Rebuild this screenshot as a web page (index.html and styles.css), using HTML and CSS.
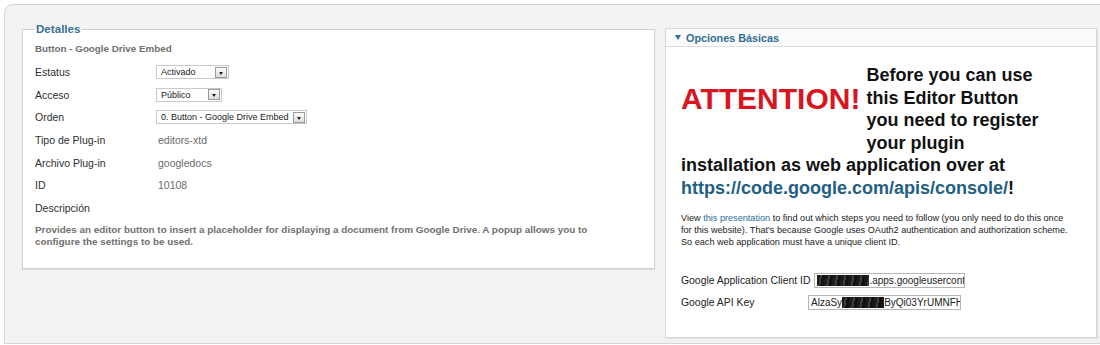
FILE: index.html
```html
<!DOCTYPE html>
<html lang="es">
  <head>
    <meta charset="UTF-8" />
    <title>Plug-in: Button - Google Drive Embed</title>
    <link rel="stylesheet" href="styles.css">
  </head>
  <body>
    <div class="page">
      <fieldset class="details">
        <legend>Detalles</legend>
        <p class="title">Button - Google Drive Embed</p>
        <ul class="fields">
          <li>
            <span class="label">Estatus</span>
            <span class="select sel-status">Activado<i class="arrow"></i></span>
          </li>
          <li>
            <span class="label">Acceso</span>
            <span class="select sel-access">Público<i class="arrow"></i></span>
          </li>
          <li>
            <span class="label">Orden</span>
            <span class="select sel-order">0. Button - Google Drive Embed<i class="arrow"></i></span>
          </li>
          <li>
            <span class="label">Tipo de Plug-in</span>
            <span class="value">editors-xtd</span>
          </li>
          <li>
            <span class="label">Archivo Plug-in</span>
            <span class="value">googledocs</span>
          </li>
          <li>
            <span class="label">ID</span>
            <span class="value">10108</span>
          </li>
          <li>
            <span class="label">Descripción</span>
          </li>
        </ul>
        <p class="desc">
          Provides an editor button to insert a placeholder for displaying a document from Google
          Drive. A popup allows you to configure the settings to be used.
        </p>
      </fieldset>

      <div class="panel">
        <h3 class="panel-head"><span class="tri"></span>Opciones Básicas</h3>
        <div class="panel-body">
          <div class="notice">
            <span class="attention">ATTENTION!</span>
            Before you can use this Editor Button you need to register your plugin installation as
            web application over at
            <a href="#">https://code.google.com/apis/console/</a>!
          </div>
          <p class="small">
            View <a href="#">this presentation</a> to find out which steps you need to follow (you
            only need to do this once for this website). That's because Google uses OAuth2
            authentication and authorization scheme. So each web application must have a unique
            client ID.
          </p>
          <div class="opt">
            <label>Google Application Client ID</label>
            <span class="input input-client"><i class="redact r1"></i>.apps.googleusercontent.com</span>
          </div>
          <div class="opt">
            <label>Google API Key</label>
            <span class="input input-key">AlzaSy<i class="redact r2"></i>ByQi03YrUMNFHnH5</span>
          </div>
        </div>
      </div>
    </div>
  </body>
</html>
```

FILE: styles.css
```css
* {
  box-sizing: border-box;
}
html,
body {
  overflow: hidden;
}
body {
  margin: 0;
  font-family: "Liberation Sans", Arial, Helvetica, sans-serif;
  color: #333;
  background-color: #fff;
}
.page {
  display: flex;
  align-items: flex-start;
  gap: 10px;
  width: 1130px;
  height: 340px;
  margin: 4px 0 0 4px;
  padding: 17px 0 0 17px;
  background-color: #f3f3f3;
  border: 1px solid #d6d6d6;
  border-radius: 9px 0 0 0;
}

/* left block */
.details {
  width: 633px;
  margin: 0;
  padding: 0 11px 20px 12px;
  background-color: #fff;
  border: 1px solid #d0d0d0;
  box-shadow: 0 1px 1px rgba(0, 0, 0, 0.08);
}
.details legend {
  padding: 0 1px;
  font-size: 11.6px;
  font-weight: bold;
  line-height: 14px;
  color: #3a7094;
}
.title {
  margin: 2px 0 0;
  height: 22.7px;
  line-height: 22.7px;
  font-size: 9.8px;
  font-weight: bold;
  color: #707070;
}
.fields {
  list-style: none;
  margin: 0;
  padding: 0;
}
.fields li {
  display: flex;
  align-items: center;
  height: 22.7px;
  font-size: 10.5px;
}
.label {
  width: 121px;
  color: #2e2e2e;
}
.value {
  margin-left: 2px;
  color: #6a6a6a;
}
.select {
  display: flex;
  align-items: center;
  justify-content: space-between;
  height: 14px;
  padding: 0 1px 0 4px;
  font-size: 9px;
  color: #222;
  background-color: #fff;
  border: 1px solid #c9c9c9;
}
.sel-status {
  width: 73px;
}
.sel-access {
  width: 66px;
}
.sel-order {
  width: 151px;
}
.arrow {
  position: relative;
  width: 12px;
  height: 11px;
  margin-left: 3px;
  border: 1px solid #9a9a9a;
  background: linear-gradient(#fdfdfd, #dcdcdc);
}
.arrow::after {
  content: "";
  position: absolute;
  left: 3px;
  top: 4px;
  border-left: 2.5px solid transparent;
  border-right: 2.5px solid transparent;
  border-top: 3px solid #222;
}
.desc {
  margin: 4px 0 0;
  padding-right: 20px;
  font-size: 9.9px;
  font-weight: bold;
  line-height: 12px;
  color: #707070;
}

/* right block */
.panel {
  width: 432px;
  margin-top: 6px;
  background-color: #fff;
  border: 1px solid #d6d6d6;
  box-shadow: 1px 1px 1px rgba(0, 0, 0, 0.06);
}
.panel-head {
  display: flex;
  align-items: center;
  height: 18px;
  margin: 0;
  padding-left: 9px;
  font-size: 10.8px;
  font-weight: bold;
  color: #2f6d92;
  background-color: #fbfbfb;
  border-bottom: 1px solid #dedede;
}
.tri {
  width: 0;
  height: 0;
  margin-right: 5px;
  border-left: 3.5px solid transparent;
  border-right: 3.5px solid transparent;
  border-top: 5px solid #2f6d92;
}
.panel-body {
  padding: 17px 15px 23px 15px;
}
.notice {
  padding-right: 30px;
  font-size: 18px;
  font-weight: bold;
  line-height: 22.6px;
  color: #111;
}
.attention {
  float: left;
  margin: 20px 6px 25px 0;
  font-size: 30px;
  line-height: 30px;
  color: #d9161f;
}
.notice a {
  color: #1f5f84;
  text-decoration: none;
}
.small {
  margin: 12px 12px 22px 0;
  font-size: 9.15px;
  line-height: 12px;
  color: #222;
}
.small a {
  color: #2b6f9e;
  text-decoration: none;
}
.opt {
  display: flex;
  align-items: center;
  height: 22px;
  font-size: 10.4px;
  color: #222;
}
.opt label {
  min-width: 123px;
  margin-right: 4px;
}
.input {
  display: flex;
  align-items: center;
  height: 15px;
  padding: 0 2px;
  overflow: hidden;
  white-space: nowrap;
  font-size: 10px;
  color: #222;
  background-color: #fff;
  border: 1px solid #b5b5b5;
}
.input-client {
  width: 151px;
}
.input-key {
  width: 153px;
}
.redact {
  display: inline-block;
  flex-shrink: 0;
  height: 11px;
  background: repeating-linear-gradient(100deg, #1b1b1b 0 3px, #3d3d3d 3px 5px, #111 5px 8px);
}
.r1 {
  width: 52px;
}
.r2 {
  width: 42px;
}
```
